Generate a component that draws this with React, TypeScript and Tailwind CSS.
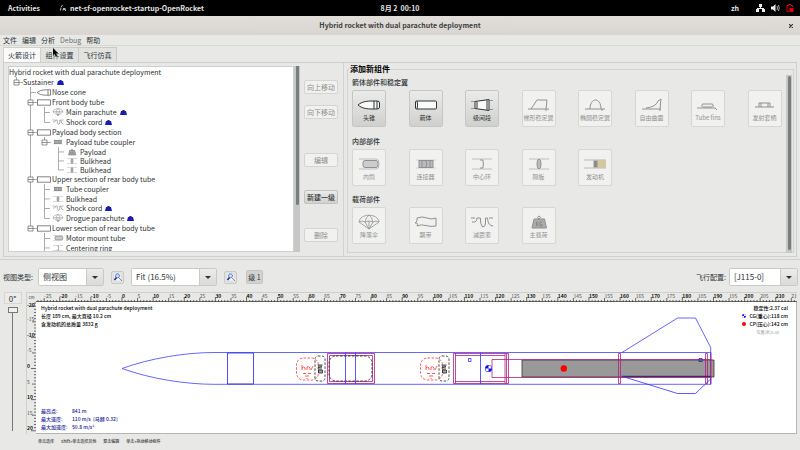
import type { ReactNode } from "react";
import clsx from "clsx";

type IconKind =
  | "nose" | "tube" | "transition" | "trapfin" | "ellfin" | "freefin" | "tubefin" | "lug"
  | "inner" | "coupler" | "ring" | "bulkhead" | "motor"
  | "chute" | "streamer" | "cord" | "mass";

const partIcons: Record<IconKind, ReactNode> = {
  nose: <path d="M0 7C4 3.500 9 3 15 3H19Q21.500 3 21.500 5V9Q21.500 11 19 11H15C9 11 4 10.500 0 7ZM16 3V11M19 3V11" fill="#fafafa" />,
  tube: (
    <>
      <rect x=".5" y="3" width="21" height="8" rx="1" fill="#fafafa" />
      <path d="M2 3Q3.200 7 2 11" />
    </>
  ),
  transition: (
    <>
      <path d="M4 3.500L18 1.500V12.500L4 10.500Z" fill="#fafafa" />
      <path d="M6 4V10M16 2V12" />
      <path d="M0 3.500H4M0 10.500H4M18 2.500H22M18 11.500H22" opacity=".4" />
    </>
  ),
  trapfin: <path d="M0 11H21M3 11L9 2H19L18 11M18 11V13" />,
  ellfin: <path d="M1 11H21M6 11C6-1 17-1 17 11M18 11V13" />,
  freefin: <path d="M1 11H20M5 10Q15 9 17 3L20 1L19 11V13" />,
  tubefin: <path d="M0 10H18L20 12M5 9V7Q5 6 6 6H15Q16 6 16 7V9M6 9H15" />,
  lug: <path d="M1 9H20M5 9V5H16V9M7 5V9M14 5V9" />,
  inner: (
    <>
      <path d="M1 2H19Q21 2 21 7T19 12H1" opacity=".5" />
      <rect x="5" y="3.500" width="15" height="7" rx="2" fill="#ccc" />
    </>
  ),
  coupler: (
    <>
      <path d="M1 3H21M1 11H21" opacity=".3" />
      <rect x="4" y="3.500" width="14" height="7" fill="#bbb" />
      <path d="M7 4V10M11 4Q12.500 7 11 10M15 4V10" />
    </>
  ),
  ring: (
    <>
      <path d="M1 2H21M1 12H21" opacity=".5" />
      <path d="M9 3H12V5Q13 7 12 9V11H9" />
    </>
  ),
  bulkhead: (
    <>
      <path d="M1 2H21M1 12H21" opacity=".5" />
      <ellipse cx="11" cy="7" rx="2" ry="5" fill="#bbb" />
    </>
  ),
  motor: (
    <>
      <rect x="13" y="3.500" width="9" height="7" fill="#d8c79a" stroke="none" />
      <path d="M0 3H22M0 11H22" opacity=".6" />
      <rect x="10" y="4" width="3" height="6" fill="#888" />
    </>
  ),
  chute: <path d="M1 7C2-2 20-2 21 7L11 14ZM1 7Q4 5 7 7Q11 5 15 7Q18 5 21 7M7 7L11 14L15 7M7 7Q8 2 11 0Q14 2 15 7M11 6V14" strokeWidth=".8" />,
  streamer: <path d="M2 3Q7 1 12 3T21 3V11Q16 12 11 10.500T2 11Q3 9 2 8L0 8L2 6Z" />,
  cord: <path d="M0 3H4M1 7H4Q6 6 6 3H8Q10 2 9.500 5T11.500 12Q14.500 12 14.500 8V3H16.500Q17 11 22 11M18 3H22" />,
  mass: (
    <>
      <path d="M6 4H16.500L18.500 13H4Z" fill="#aaa" />
      <circle cx="11" cy="2.500" r="1.300" />
      <path d="M8.500 7V11M10.500 7L8.500 9L10.500 11M14 7H12V11H14V9" stroke="#888" />
    </>
  ),
};

function PartIcon({ kind, className }: { kind: IconKind; className: string }) {
  return (
    <svg viewBox="-1 -1 24 16" fill="none" stroke="currentColor" strokeWidth="1" className={className} aria-hidden>
      {partIcons[kind]}
    </svg>
  );
}

function TreeIcon({ kind }: { kind: IconKind }) {
  if (kind === "tube" || kind === "nose") {
    return (
      <svg viewBox="0 0 14 7" className="mr-px h-[7px] w-[14px] shrink-0" fill="#fff" stroke="#666" strokeWidth=".8">
        {kind === "tube" ? (
          <path d="M-1 .8H13.500V6.200H-1M.5 .8V6.200" />
        ) : (
          <path d="M0 3.500Q3 .8 8 .8H13.500V6.200H8Q3 6.200 0 3.500ZM11 .8V6.200" />
        )}
      </svg>
    );
  }
  return <PartIcon kind={kind} className="mr-px h-[8px] w-[14px] shrink-0 text-[#666]" />;
}

const partGroups: { title: string; parts: { label: string; icon: IconKind; enabled?: boolean }[] }[] = [
  {
    title: "箭体部件和稳定翼",
    parts: [
      { label: "头锥", icon: "nose", enabled: true },
      { label: "箭体", icon: "tube", enabled: true },
      { label: "级间段", icon: "transition", enabled: true },
      { label: "梯形稳定翼", icon: "trapfin" },
      { label: "椭圆稳定翼", icon: "ellfin" },
      { label: "自由曲面", icon: "freefin" },
      { label: "Tube fins", icon: "tubefin" },
      { label: "发射套柄", icon: "lug" },
    ],
  },
  {
    title: "内部部件",
    parts: [
      { label: "内筒", icon: "inner" },
      { label: "连接器", icon: "coupler" },
      { label: "中心环", icon: "ring" },
      { label: "隔板", icon: "bulkhead" },
      { label: "发动机", icon: "motor" },
    ],
  },
  {
    title: "载荷部件",
    parts: [
      { label: "降落伞", icon: "chute" },
      { label: "飘带", icon: "streamer" },
      { label: "减震索", icon: "cord" },
      { label: "主载荷", icon: "mass" },
    ],
  },
];

// guides: one letter per indent cell
// "." empty, "|" line, "t" tee, "l" last, "+" toggle in a line, "-" last toggle
const treeRows: { guides: string; label: string; icon?: IconKind; mass?: boolean }[] = [
  { guides: "-", label: "Sustainer", mass: true },
  { guides: ".t", label: "Nose cone", icon: "nose" },
  { guides: ".+", label: "Front body tube", icon: "tube" },
  { guides: ".|t", label: "Main parachute", icon: "chute", mass: true },
  { guides: ".|l", label: "Shock cord", icon: "cord", mass: true },
  { guides: ".+", label: "Payload body section", icon: "tube" },
  { guides: ".|-", label: "Payload tube coupler", icon: "coupler" },
  { guides: ".|.t", label: "Payload", icon: "mass" },
  { guides: ".|.t", label: "Bulkhead", icon: "bulkhead" },
  { guides: ".|.l", label: "Bulkhead", icon: "bulkhead" },
  { guides: ".+", label: "Upper section of rear body tube", icon: "tube" },
  { guides: ".|t", label: "Tube coupler", icon: "coupler" },
  { guides: ".|t", label: "Bulkhead", icon: "bulkhead" },
  { guides: ".|t", label: "Shock cord", icon: "cord", mass: true },
  { guides: ".|l", label: "Drogue parachute", icon: "chute", mass: true },
  { guides: ".-", label: "Lower section of rear body tube", icon: "tube" },
  { guides: "..t", label: "Motor mount tube", icon: "inner" },
  { guides: "..t", label: "Centering ring", icon: "ring" },
];

const shortKinds: IconKind[] = ["bulkhead", "mass", "ring"];

const guidePaths: Record<string, string> = {
  ".": "",
  "|": "M7.500 0V10",
  t: "M7.500 0V10M7.500 5.500H13",
  l: "M7.500 0V5.500H13",
  "+": "M7.500 0V3M7.500 8V10M10 5.500H14",
  "-": "M7.500 0V3M10 5.500H14",
};

function Guide({ type }: { type: string }) {
  return (
    <svg viewBox="0 0 14 10" preserveAspectRatio="none" className="h-full w-[14px] shrink-0" fill="none" stroke="#aaa">
      <path d={guidePaths[type]} />
      {(type === "+" || type === "-") && <path d="M5 3H10V8H5ZM5 5.500H10" stroke="#666" strokeWidth=".7" />}
    </svg>
  );
}

function ComponentTree() {
  return (
    <ul className="h-[186px] flex-1 overflow-hidden border border-[#cfcfcc] bg-white text-[7px] text-[#2b2f31]">
      <li className="h-[10px] leading-[10px]">Hybrid rocket with dual parachute deployment</li>
      {treeRows.map((row, i) => (
        <li
          key={i}
          className={clsx(
            "flex items-center whitespace-nowrap leading-[10px]",
            row.icon && shortKinds.includes(row.icon) ? "h-[9px]" : "h-[10px]",
          )}
        >
          {row.guides.split("").map((g, j) => (
            <Guide key={j} type={g} />
          ))}
          {row.icon && <TreeIcon kind={row.icon} />}
          {row.label}
          {row.mass && (
            <svg viewBox="0 0 7 5" className="ml-[3px] h-[5px] w-[7px]" fill="#1c1cb0">
              <path d="M0 5L1 1H2Q2 0 3.500 0T5 1H6L7 5Z" />
            </svg>
          )}
        </li>
      ))}
    </ul>
  );
}

function SideButton({ label, enabled, className }: { label: string; enabled?: boolean; className?: string }) {
  return (
    <button
      disabled={!enabled}
      className={clsx(
        "h-[14px] w-full whitespace-nowrap rounded-[2px] border text-[7px] leading-[12px]",
        enabled
          ? "border-[#c2c2be] bg-linear-to-b from-[#eaeae8] to-[#d2d2d0] font-medium text-[#2e3436]"
          : "border-[#d4d4d0] bg-[#f1f1f0] text-[#8b8e8f]",
        className,
      )}
    >
      {label}
    </button>
  );
}

function PartPicker() {
  return (
    <fieldset className="flex h-[190px] min-w-0 flex-1 border border-[#d2d2ce] pb-px pr-px">
      <legend className="ml-px px-px text-[8px] font-bold leading-[12px] text-black">添加新组件</legend>
      <div className="flex min-w-0 flex-1 flex-col px-[4px]">
        {partGroups.map((group) => (
          <section key={group.title} className="h-[59px]">
            <h2 className="h-[15px] text-[7px] font-medium leading-[15px] text-[#2e3436]">{group.title}</h2>
            <div className="grid grid-cols-8 gap-[22px]">
              {group.parts.map((part) => (
                <button
                  key={part.label}
                  disabled={!part.enabled}
                  className={clsx(
                    "flex h-[37px] w-[34px] flex-col items-center justify-center whitespace-nowrap rounded-[2px] border pt-[3px] text-[6px] leading-[10px]",
                    part.enabled
                      ? "border-[#c6c6c2] bg-linear-to-b from-[#ebebe9] to-[#d0d0ce] text-[#2e3436]"
                      : "border-[#d6d6d3] bg-[#f1f1f0] text-[#8f9293]",
                  )}
                >
                  <PartIcon kind={part.icon} className="h-[16px] w-[24px]" />
                  {part.label}
                </button>
              ))}
            </div>
          </section>
        ))}
      </div>
      <div className="flex h-[178px] w-[6px] justify-center bg-[#c6c8c7] py-px">
        <div className="h-[174px] w-[3px] rounded-full bg-[#787d7e]" />
      </div>
    </fieldset>
  );
}

function Combo({ id, value, className }: { id: string; value: string; className: string }) {
  return (
    <div className={clsx("flex h-[18px] overflow-hidden rounded-[2px] border border-[#c9c9c5] bg-white", className)}>
      <select id={id} aria-label={id} className="min-w-0 flex-1 appearance-none bg-white px-[4px] text-[8px] text-[#2e3436]">
        <option>{value}</option>
      </select>
      <span className="flex w-[17px] items-center justify-center border-l border-[#c9c9c5] bg-linear-to-b from-[#ececea] to-[#dadad8]">
        <svg viewBox="0 0 6 3" className="h-[3px] w-[6px]" fill="#2e3436">
          <path d="M0 0H6L3 3Z" />
        </svg>
      </span>
    </div>
  );
}

function ZoomButton({ label }: { label: string }) {
  return (
    <button aria-label={label} className="flex size-[13px] items-center justify-center rounded-[2px] border border-[#c9c9c5] bg-[#e4e4e2]">
      <svg viewBox="0 0 10 10" className="size-[10px]" fill="none">
        <path d="M1 1H8V9H1Z" fill="#f8f8f8" stroke="#ccc" strokeWidth=".5" />
        <circle cx="4.500" cy="3.800" r="2" fill="#cfe0ff" stroke="#5a7fc0" />
        <path d="M3.500 5.500L1.500 8" stroke="#1d3f95" strokeWidth="1.800" />
        <path d="M6 6L9 9" stroke="#8a8a8a" />
      </svg>
    </button>
  );
}

const PX_PER_CM = 3.113;
const range = (from: number, to: number) => Array.from({ length: to - from + 1 }, (_, i) => from + i);

function tickLength(cm: number) {
  if (cm % 10 === 0) return 5;
  return cm % 5 === 0 ? 4 : 2;
}

function HorizontalRuler() {
  const lastCm = Math.floor((window.innerWidth - 125) / PX_PER_CM);
  return (
    <svg className="h-[10px] min-w-0 flex-1 overflow-hidden border-t border-[#cfcfcc]" stroke="#333" fontSize="5">
      {range(-27, lastCm).map((cm) => {
        const x = 86 + cm * PX_PER_CM;
        return (
          <g key={cm}>
            <path d={`M${x} 9V${9 - tickLength(cm)}`} strokeWidth=".7" />
            {cm % 5 === 0 && (
              <text x={x} y="4.500" stroke="none" fill={cm % 10 ? "#555" : "#111"} fontWeight={cm % 10 ? 400 : 700}>
                {cm}
              </text>
            )}
          </g>
        );
      })}
      <path d="M0 8.500H4000" strokeWidth=".7" />
    </svg>
  );
}

function VerticalRuler() {
  const lastCm = Math.floor((window.innerHeight - 385) / PX_PER_CM);
  return (
    <svg className="h-0 min-h-full w-[10px] shrink-0 overflow-hidden border-l border-[#cfcfcc]" stroke="#333" fontSize="5">
      {range(-21, lastCm).map((cm) => {
        const y = 66.5 + cm * PX_PER_CM;
        return (
          <g key={cm}>
            <path d={`M9 ${y}H${9 - tickLength(cm)}`} strokeWidth=".7" />
            {cm % 5 === 0 && (
              <text
                x="0"
                y={Math.max(y - 0.5, 5)}
                stroke="none"
                fill={cm % 10 ? "#555" : "#111"}
                fontWeight={cm % 10 ? 400 : 700}
              >
                {cm}
              </text>
            )}
          </g>
        );
      })}
    </svg>
  );
}

function PackedRecovery({ x }: { x: number }) {
  return (
    <g transform={`translate(${x} 0)`}>
      <rect x=".5" y="56" width="22" height="22" rx="7" stroke="#ff3030" strokeDasharray="2.500 1.500" />
      <path d="M6 63V68M6 66Q8 64 9 66V68M11 68V65Q13 64 14 66V68M15 68L17 64M7 71.500H10M12 71.500H15M9 74H13M10.500 76.500H11.500" stroke="#ff3030" />
      <rect x="19" y="54" width="10" height="25" rx="3" stroke="#222" strokeDasharray="2.500 1.500" />
      <path d="M21.500 63H26.500M21.500 66L26 64.500M22 68H26.500V71H22.500V68.500M23 63V71M25 63V71" stroke="#222" />
    </g>
  );
}

function RocketDrawing() {
  return (
    <svg className="absolute inset-0 size-full" fill="none" strokeWidth=".8">
      <g stroke="#4040ff">
        <path d="M86 66.500C115 56 150 50.500 178 50.500H675M86 66.500C115 77 150 82.300 178 82.300H675V50.500" />
        <path d="M191.500 51H217.500V82H191.500Z" stroke="#2222dd" />
        <path d="M586 50.500L641.500 16H659.500L674.700 45.500V82" />
      </g>
      <PackedRecovery x={260} />
      <path d="M291.500 51.500H338.500V81.500H291.500ZM293.500 53.500H336.500V79.500H293.500Z" stroke="#b02080" />
      <rect x="293" y="54" width="43" height="25" rx="7" stroke="#222" strokeDasharray="2.500 1.500" />
      <path d="M309.500 50.500V82M319.500 50.500V82" stroke="#3030ff" />
      <PackedRecovery x={384} />
      <path d="M417.500 51.500H472.500V81.500H417.500ZM419.500 51.500V81.500M469 51.500V81.500M470.500 51.500V81.500M419.500 53.500H469M419.500 79.500H469" stroke="#b02080" />
      <path d="M444.500 50.500V82M432.500 56.500H435V59.500H432.500Z" stroke="#3030ff" />
      <path d="M486 58H678V75H486Z" fill="#999" stroke="#333" />
      <path d="M456 57.500H675V75.500H456Z" stroke="#b02080" />
      <path d="M582.500 51.500H584.500V81.500H582.500ZM669.500 51.500H671.500V81.500H669.500ZM674.500 51.500V81.500" stroke="#b02080" />
      <path d="M586 74.300H674.700" stroke="#101060" />
      <path d="M586 74.300L641.500 91.500H659.500L674.700 77" stroke="#3030ff" />
      <path d="M663 56.500H666V59.500H663Z" stroke="#2020b0" />
      <g stroke="none">
        <circle cx="452.500" cy="66.500" r="3.500" fill="#1010ee" />
        <path d="M452.500 66.500V63.500A3 3 0 0 1 455.500 66.500ZM452.500 66.500V69.500A3 3 0 0 1 449.500 66.500Z" fill="#fff" />
        <circle cx="527.800" cy="66.500" r="3.200" fill="#ff0000" />
      </g>
    </svg>
  );
}

const flightStats = [
  ["最高点:", "841 m"],
  ["最大速度:", "110 m/s  (马赫 0.32)"],
  ["最大加速度:", "50.8 m/s²"],
];

function RocketView() {
  return (
    <div className="relative flex min-w-0 flex-1 flex-col justify-between overflow-hidden border-b border-r border-[#b5b5b2] bg-white py-[2px] pl-[5px] pr-[8px] text-[5px] font-medium leading-[8px] text-black">
      <RocketDrawing />
      <div className="relative flex justify-between">
        <div>
          <p>Hybrid rocket with dual parachute deployment</p>
          <p>长度 189 cm, 最大直径 10.2 cm</p>
          <p>含发动机的总质量 3832 g</p>
        </div>
        <div className="flex flex-col items-end">
          <p>稳定性:2.37 cal</p>
          <p className="flex items-center gap-[3px]">
            <svg viewBox="0 0 4 4" className="size-[4px]">
              <circle cx="2" cy="2" r="2" fill="#1010ee" />
              <path d="M2 2V0A2 2 0 0 1 4 2ZM2 2V4A2 2 0 0 1 0 2Z" fill="#fff" />
            </svg>
            CG(重心):118 cm
          </p>
          <p className="flex items-center gap-[4px]">
            <span className="size-[4px] rounded-full bg-[#ff0000]" />
            CP(压心):142 cm
          </p>
          <p className="mr-[9px] text-[4px] font-normal text-[#999]">位置(米)0.30</p>
        </div>
      </div>
      <dl className="relative text-[#202098]">
        {flightStats.map(([name, value]) => (
          <div key={name} className="flex whitespace-pre">
            <dt className="w-[31px]">{name}</dt>
            <dd>{value}</dd>
          </div>
        ))}
      </dl>
    </div>
  );
}

function TopBar() {
  return (
    <header className="grid h-[16px] grid-cols-[1fr_auto_1fr] items-center bg-black px-[8px] text-[7px] font-bold leading-[16px] text-[#e4e4e4]">
      <div className="flex items-center">
        <button className="w-[52px] text-left">Activities</button>
        <svg viewBox="0 0 6 6" className="mr-[4px] size-[6px]" fill="none" stroke="#ddd" strokeWidth=".8">
          <path d="M2.500 0L1 2M1 2.500L.5 5.500M3 3.500H5.500M3 5.500V4.500H5.500V6" />
        </svg>
        <span>net-sf-openrocket-startup-OpenRocket</span>
      </div>
      <time>8月 2&nbsp; 00:10</time>
      <div className="flex items-center justify-end">
        <span className="mr-[17px]">zh</span>
        <svg viewBox="0 0 9 8" className="mr-[6px] h-[8px] w-[9px]" fill="#eee">
          <path d="M3 0H6V3H5V4H8V5H9V8H6V5H3V8H0V5H1V4H4V3H3Z" />
        </svg>
        <svg viewBox="0 0 9 8" className="mr-[6px] h-[8px] w-[9px]" fill="#eee">
          <path d="M0 2.500H2L4.500 0V8L2 5.500H0Z" />
          <path d="M6 2Q7 4 6 6M7.500 1Q9 4 7.500 7" fill="none" stroke="#aaa" />
        </svg>
        <svg viewBox="0 0 8 8" className="mr-[-2px] h-[8px] w-[8px]" fill="none" stroke="#e00000">
          <path d="M3 7.500H1V1.500H2.500V.5H5V1.500H6.500V3" />
          <path d="M3.500 4H7.500V8H3.500Z" fill="#e00000" stroke="none" />
        </svg>
      </div>
    </header>
  );
}

const menus = ["文件", "编辑", "分析", "Debug", "帮助"];
const tabs = ["火箭设计", "组件设置", "飞行仿真"];

export default function App() {
  return (
    <div className="relative flex min-h-screen w-full flex-col bg-[#e8e8e6] font-['Noto_Sans_CJK_SC','Noto_Sans',sans-serif] text-[7px] text-[#2e3436]">
      <TopBar />

      <div className="flex h-[19px] items-center bg-linear-to-b from-[#e1deda] to-[#d9d5d0] px-[6px]">
        <h1 className="flex-1 pl-[6px] text-center text-[7px] font-bold text-[#3c4143]">Hybrid rocket with dual parachute deployment</h1>
        <button aria-label="Close" className="flex size-[6px] items-center justify-center">
          <svg viewBox="0 0 4 4" className="size-[4px]" stroke="#2e3436" strokeWidth="1.200">
            <path d="M0 0L4 4M4 0L0 4" />
          </svg>
        </button>
      </div>

      <nav className="flex h-[11px] gap-[5px] border-b border-[#d8d8d5] px-[3px] leading-[10px]">
        {menus.map((menu) => (
          <button key={menu} className={menu === "Debug" ? "text-[#6a6e70]" : ""}>
            {menu}
          </button>
        ))}
      </nav>

      <div className="mt-px flex h-[15px] pl-[3px]" role="tablist">
        {tabs.map((tab, i) => (
          <button
            key={tab}
            role="tab"
            aria-selected={i === 0}
            className={clsx(
              "h-full w-[38px] border-r border-t pt-px text-[7px]",
              i === 0 ? "border-l border-[#d0d0cc] bg-[#fafafa]" : "border-[#cacac6] bg-[#e2e2e0]",
            )}
          >
            {tab}
          </button>
        ))}
      </div>

      <main className="mx-[3px] flex h-[195px] border border-[#cfcfcc] pl-[4px] pr-[2px]">
        <div className="mt-[3px] flex w-[292px]">
          <ComponentTree />
          <div className="flex h-[186px] w-[6px] justify-center bg-[#c6c8c7]">
            <div className="h-[139px] w-[3px] rounded-b-full bg-[#787d7e]" />
          </div>
        </div>
        <div className="mr-[3px] flex w-[44px] flex-col border-r border-[#d2d2ce] pl-[4px] pr-[5px] pt-[17px]">
          <SideButton label="向上移动" />
          <SideButton label="向下移动" className="mt-[11px]" />
          <SideButton label="编辑" className="mt-[34px]" />
          <SideButton label="新建一级" enabled className="mt-[23px]" />
          <SideButton label="删除" className="mt-[24px]" />
        </div>
        <PartPicker />
      </main>

      <div className="mt-[2px] border-t border-[#d0d0cc]" />

      <div className="flex items-center pb-[6px] pl-[3px] pr-[2px] pt-[8px]">
        <label htmlFor="view-type" className="w-[35px]">视图类型:</label>
        <Combo id="view-type" value="侧视图" className="w-[66px]" />
        <div className="mx-[7px] flex">
          <ZoomButton label="Zoom out" />
        </div>
        <Combo id="zoom" value="Fit (16.5%)" className="w-[86px]" />
        <div className="ml-[7px] mr-[9px] flex">
          <ZoomButton label="Zoom in" />
        </div>
        <button className="h-[14px] w-[17px] rounded-[2px] border border-[#c4c4c0] bg-[#d2d2d0] leading-[12px]">级 1</button>
        <label htmlFor="flight-config" className="ml-auto mr-[3px]">飞行配置:</label>
        <Combo id="flight-config" value="[J115-0]" className="w-[69px]" />
      </div>

      <div className="flex flex-1 pr-[3px]">
        <div className="flex w-[26px] flex-col items-center pr-px">
          <input
            aria-label="Rotation"
            defaultValue="0°"
            className="h-[12px] w-[18px] border border-[#d6d6d3] bg-[#ebebea] text-center text-[8px] leading-[10px]"
          />
          <input
            type="range"
            aria-label="Rotation angle"
            defaultValue={0}
            className="mb-[3px] mt-[3px] h-0 w-[10px] flex-1 appearance-none bg-linear-to-r from-transparent from-45% via-[#777] via-45% to-transparent to-55% [writing-mode:vertical-lr] [&::-webkit-slider-thumb]:h-[6px] [&::-webkit-slider-thumb]:w-[10px] [&::-webkit-slider-thumb]:appearance-none [&::-webkit-slider-thumb]:border [&::-webkit-slider-thumb]:border-[#777] [&::-webkit-slider-thumb]:bg-[#eeeeec]"
          />
        </div>
        <div className="flex min-w-0 flex-1 flex-col">
          <div className="flex">
            <span className="h-[10px] w-[10px] border-l border-t border-[#cfcfcc] text-center text-[4px] leading-[8px]">cm</span>
            <HorizontalRuler />
          </div>
          <div className="flex flex-1">
            <VerticalRuler />
            <RocketView />
          </div>
        </div>
      </div>

      <footer className="flex h-[16px] gap-[7px] pl-[38px] text-[4px] font-medium leading-[14px] text-[#333]">
        <span>单击选择</span>
        <span>Shift+单击选择其他</span>
        <span>双击编辑</span>
        <span>单击+拖动移动组件</span>
      </footer>

      <svg viewBox="0 0 6 8" className="pointer-events-none absolute left-[53px] top-[48px] h-[8px] w-[6px]" fill="#000">
        <path d="M0 0L5 5H3L4 8L2.500 8L1.500 5.500L0 7Z" />
      </svg>
    </div>
  );
}
